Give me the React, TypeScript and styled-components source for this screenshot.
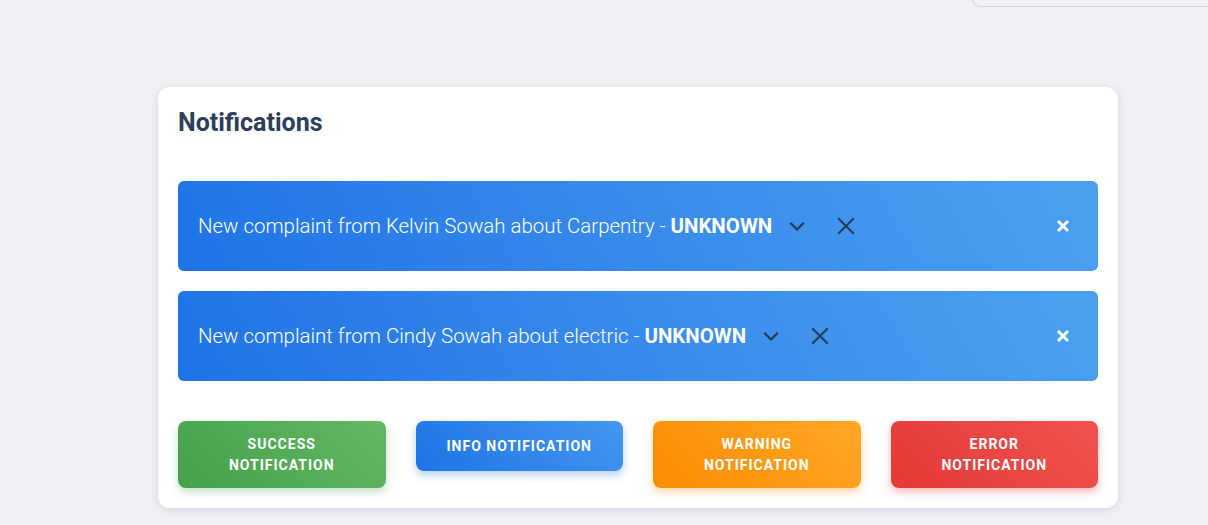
import React from "react";
import styled, { createGlobalStyle } from "styled-components";

const Global = createGlobalStyle`
  html, body { margin: 0; padding: 0; background: #f0f1f6; }
  body { font-family: Roboto, "Noto Sans", Arial, sans-serif; }
  * { box-sizing: border-box; }
`;

const Page = styled.div`
  min-height: 525px;
  background: #f0f1f6;
`;

const Header = styled.header`
  height: 7px;
  overflow: hidden;
  display: flex;
  align-items: flex-end;
  justify-content: space-between;
`;

const PageTitle = styled.div`
  width: 47px;
  display: flex;
  justify-content: flex-end;
  overflow: hidden;
  h1 {
    margin: 0;
    font-size: 24px;
    line-height: 24px;
    font-weight: 700;
    color: #2c3e5a;
    white-space: nowrap;
    transform: translateY(-14px);
  }
`;

const Search = styled.div`
  width: 250px;
  height: 40px;
  border: 1px solid #d3d5db;
  border-radius: 8px;
  margin-right: -14px;
  background: #f0f1f6;
`;

const Card = styled.section`
  margin: 80px 90px 0 158px;
  background: #ffffff;
  border-radius: 12px;
  box-shadow: 0 2px 8px rgba(20, 30, 60, 0.12);
  padding: 21px 20px 20px;
`;

const Title = styled.h2`
  margin: 0 0 43px;
  font-size: 25px;
  line-height: 30px;
  font-weight: 700;
  color: #2c3e5a;
`;

const List = styled.div`
  display: flex;
  flex-direction: column;
  gap: 20px;
`;

const Row = styled.div`
  height: 90px;
  border-radius: 6px;
  background: linear-gradient(60deg, #1f73e6 0%, #3b8deb 55%, #4aa1f0 100%);
  display: flex;
  align-items: center;
  padding: 0 28px 0 20px;
  color: #ffffff;
`;

const Message = styled.span`
  font-size: 20.45px;
  font-weight: 300;
  b { font-weight: 700; }
`;

const IconBtn = styled.span<{ $ml: number }>`
  display: inline-flex;
  margin-left: ${(p) => p.$ml}px;
  color: #24395a;
`;

const Close = styled.span`
  margin-left: auto;
  display: inline-flex;
`;

const Buttons = styled.div`
  margin-top: 40px;
  display: grid;
  grid-template-columns: repeat(4, 1fr);
  gap: 30px;
  align-items: start;
`;

const colors: Record<string, [string, string, string]> = {
  success: ["#45a049", "#62b865", "rgba(76,175,80,0.35)"],
  info: ["#1f73e6", "#4498ee", "rgba(33,120,230,0.35)"],
  warning: ["#fb8c00", "#ffa726", "rgba(251,140,0,0.35)"],
  error: ["#e53935", "#ef5350", "rgba(229,57,53,0.35)"],
};

const Btn = styled.button<{ $kind: string }>`
  border: none;
  border-radius: 8px;
  padding: 12.5px 26px 11.5px;
  min-height: 50px;
  font-family: Roboto, Arial, sans-serif;
  font-size: 14px;
  line-height: 21.5px;
  font-weight: 700;
  letter-spacing: 1px;
  text-transform: uppercase;
  color: #fff;
  background: ${(p) => `linear-gradient(45deg, ${colors[p.$kind][0]}, ${colors[p.$kind][1]})`};
  box-shadow: 0 4px 8px ${(p) => colors[p.$kind][2]};
`;

const Chevron = () => (
  <svg width="24" height="24" viewBox="0 0 24 24" fill="none" stroke="currentColor" strokeWidth="2.2" strokeLinecap="square">
    <path d="M6 9.5l6 6 6-6" />
  </svg>
);

const XIcon = () => (
  <svg width="22" height="22" viewBox="0 0 24 24" fill="none" stroke="currentColor" strokeWidth="2.2">
    <path d="M3.5 3.5l17 17M20.5 3.5l-17 17" />
  </svg>
);

const SmallX = () => (
  <svg width="14" height="14" viewBox="0 0 14 14" fill="none" stroke="#ffffff" strokeWidth="3">
    <path d="M2 2l10 10M12 2L2 12" />
  </svg>
);

const items = [
  { name: "Kelvin Sowah", topic: "Carpentry" },
  { name: "Cindy Sowah", topic: "electric" },
];

export default function App() {
  return (
    <Page>
      <Global />
      <Header>
        <PageTitle>
          <h1>Notifications</h1>
        </PageTitle>
        <Search />
      </Header>
      <Card>
        <Title>Notifications</Title>
        <List>
          {items.map((it) => (
            <Row key={it.name}>
              <Message>
                New complaint from {it.name} about {it.topic} - <b>UNKNOWN</b>
              </Message>
              <IconBtn $ml={13}>
                <Chevron />
              </IconBtn>
              <IconBtn $ml={26}>
                <XIcon />
              </IconBtn>
              <Close>
                <SmallX />
              </Close>
            </Row>
          ))}
        </List>
        <Buttons>
          <Btn $kind="success">Success notification</Btn>
          <Btn $kind="info">Info notification</Btn>
          <Btn $kind="warning">Warning notification</Btn>
          <Btn $kind="error">Error notification</Btn>
        </Buttons>
      </Card>
    </Page>
  );
}
